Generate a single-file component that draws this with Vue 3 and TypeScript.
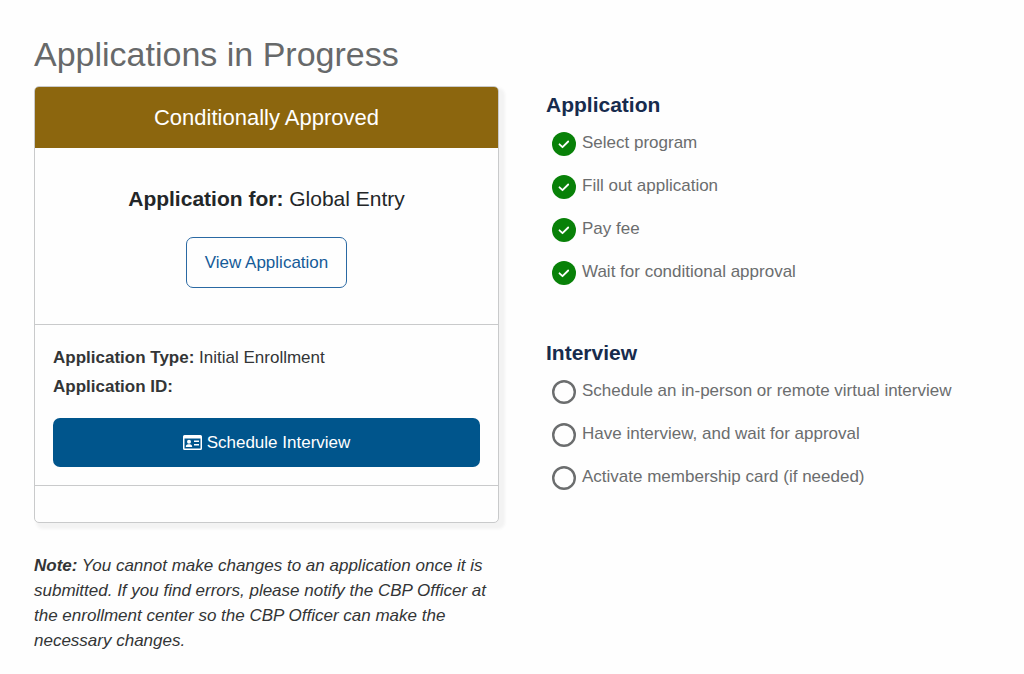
<script setup lang="ts">
interface Step {
  label: string
  done: boolean
}

interface Phase {
  id: string
  title: string
  steps: Step[]
}

const phases: Phase[] = [
  {
    id: 'application',
    title: 'Application',
    steps: [
      { label: 'Select program', done: true },
      { label: 'Fill out application', done: true },
      { label: 'Pay fee', done: true },
      { label: 'Wait for conditional approval', done: true },
    ],
  },
  {
    id: 'interview',
    title: 'Interview',
    steps: [
      { label: 'Schedule an in-person or remote virtual interview', done: false },
      { label: 'Have interview, and wait for approval', done: false },
      { label: 'Activate membership card (if needed)', done: false },
    ],
  },
]
</script>

<template>
  <main class="page">
    <h1 class="title">Applications in Progress</h1>
    <div class="columns">
      <div class="main-column">
        <article class="card">
          <header class="status">Conditionally Approved</header>
          <section class="program">
            <h2 class="program-name"><strong>Application for:</strong> Global Entry</h2>
            <button type="button" class="button outline">View Application</button>
          </section>
          <section class="details">
            <p class="detail"><strong>Application Type:</strong> Initial Enrollment</p>
            <p class="detail"><strong>Application ID:</strong></p>
            <button type="button" class="button solid">
              <svg class="card-icon" viewBox="0 0 19 15" aria-hidden="true">
                <path
                  fill="currentColor"
                  fill-rule="evenodd"
                  d="M1.500 0h16a1.500 1.500 0 0 1 1.500 1.500v12a1.500 1.500 0 0 1-1.500 1.500h-16a1.500 1.500 0 0 1-1.500-1.500v-12a1.500 1.500 0 0 1 1.500-1.500zM1.500 3.500v10h16v-10z"
                />
                <circle cx="6" cy="6.700" r="2" fill="currentColor" />
                <path
                  fill="currentColor"
                  d="M2.800 12c0-1.800 1-2.700 2.400-2.700h1.600c1.400 0 2.400.9 2.400 2.700zM11 5.500h5v1.500h-5zM11 9h5v1.500h-5z"
                />
              </svg>
              Schedule Interview
            </button>
          </section>
          <footer class="card-footer"></footer>
        </article>
        <p class="note">
          <strong>Note:</strong> You cannot make changes to an application once it is submitted. If you
          find errors, please notify the CBP Officer at the enrollment center so the CBP Officer can make
          the necessary changes.
        </p>
      </div>
      <div class="progress">
        <section v-for="phase in phases" :key="phase.id" class="phase" :aria-labelledby="phase.id">
          <h2 :id="phase.id" class="phase-title">{{ phase.title }}</h2>
          <ol class="steps">
            <li v-for="step in phase.steps" :key="step.label" class="step">
              <svg class="step-icon" viewBox="0 0 24 24" aria-hidden="true">
                <template v-if="step.done">
                  <circle cx="12" cy="12" r="12" fill="#088108" />
                  <path
                    d="M7.500 12.300l3 2.900 5.700-5.700"
                    fill="none"
                    stroke="#fff"
                    stroke-width="1.800"
                    stroke-linecap="round"
                    stroke-linejoin="round"
                  />
                </template>
                <circle v-else cx="12" cy="12" r="10.800" fill="none" stroke="#6b6d6e" stroke-width="2.400" />
              </svg>
              <span>{{ step.label }}</span>
            </li>
          </ol>
        </section>
      </div>
    </div>
  </main>
</template>

<style>
body {
  margin: 0;
  background: #fefefe;
}
</style>

<style scoped>
.page {
  box-sizing: border-box;
  padding: 32px 34px 20px;
  color: #333536;
  font-family: "Liberation Sans", Arial, Helvetica, sans-serif;
  font-size: 17px;
  line-height: 25px;
}

.title {
  margin: 0;
  color: #67696a;
  font-size: 34px;
  font-weight: 400;
  line-height: 44px;
}

.columns {
  display: grid;
  grid-template-columns: minmax(0, 465fr) minmax(0, 444fr);
  gap: 47px;
  align-items: start;
  margin-top: 10px;
}

.card {
  overflow: hidden;
  border: 1px solid #c9cacb;
  border-radius: 5px;
  background: #fefefe;
  box-shadow: 4px 4px 3px 2px #f3f3f3;
}

.status {
  padding: 16px;
  background: #8c660e;
  color: #fff;
  font-size: 22px;
  line-height: 29px;
  text-align: center;
}

.program {
  padding: 36px 18px;
  text-align: center;
}

.program-name {
  margin: 0 0 24px;
  color: #232628;
  font-size: 21px;
  font-weight: 400;
  line-height: 29px;
}

.button {
  border-radius: 7px;
  font: inherit;
  cursor: pointer;
}

.outline {
  padding: 12px 18px;
  border: 1px solid #2a69a3;
  background: #fefefe;
  color: #155b98;
}

.details {
  padding: 18px;
  border-top: 1px solid #c9cacb;
  border-bottom: 1px solid #c9cacb;
}

.detail {
  margin: 0;
  line-height: 29px;
}

.solid {
  display: flex;
  align-items: center;
  justify-content: center;
  gap: 5px;
  width: 100%;
  margin-top: 17px;
  padding: 12px;
  border: 0;
  background: #00558c;
  color: #fff;
}

.card-icon {
  width: 19px;
  height: 15px;
}

.card-footer {
  height: 36px;
}

.note {
  margin: 30px 0 0;
  font-style: italic;
}

.progress {
  display: grid;
  gap: 53px;
  padding-top: 4px;
}

.phase-title {
  margin: 0;
  color: #172b4d;
  font-size: 21px;
  line-height: 30px;
}

.steps {
  display: grid;
  gap: 17px;
  margin: 0;
  padding: 10px 0 0 6px;
  list-style: none;
}

.step {
  display: flex;
  align-items: flex-start;
  gap: 6px;
  min-height: 26px;
  color: #6b6d6e;
}

.step-icon {
  flex: none;
  width: 24px;
  height: 24px;
  margin-top: 2px;
}
</style>
